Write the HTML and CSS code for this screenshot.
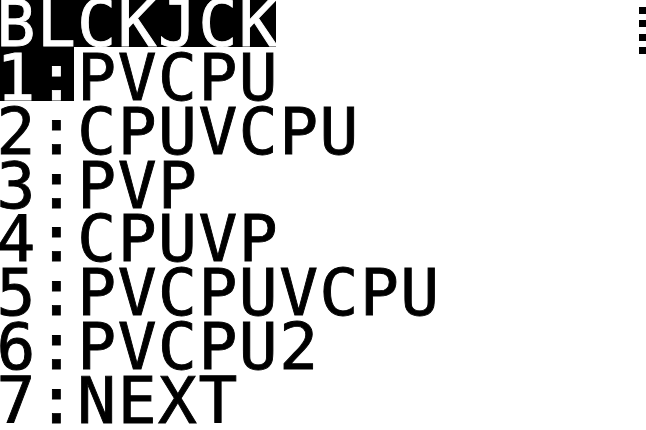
FILE: index.html
```html
<!DOCTYPE html>
<html lang="en">
<head>
    <meta charset="UTF-8">
    <title>BLCKJCK</title>
    <link rel="stylesheet" href="styles.css">
</head>
<body>
    <div class="screen">
        <div class="run"></div>
        <div class="lines">
            <div class="row"><span class="inv w7">BLCKJCK</span></div>
            <div class="row"><span class="inv w2">1:</span><span>PVCPU</span></div>
            <div class="row"><span>2:CPUVCPU</span></div>
            <div class="row"><span>3:PVP</span></div>
            <div class="row"><span>4:CPUVP</span></div>
            <div class="row"><span>5:PVCPUVCPU</span></div>
            <div class="row"><span>6:PVCPU2</span></div>
            <div class="row"><span>7:NEXT</span></div>
        </div>
    </div>
</body>
</html>
```

FILE: styles.css
```css
* {margin:0;padding:0;box-sizing: border-box;}
html, body {background: #fff;color: #000;}
.screen {position: relative;width: 646px;height: 430px;overflow: hidden;background: #fff;}
/* one calc pixel = 6.73 x 6.72, first row/col cropped off */
.lines {display: flex;flex-direction: column;margin: -6.72px 0 0 -6.73px;}
.row {display: flex;height: 53.75px;font-family: 'DejaVu Sans Mono', monospace;font-size: 64.5px;letter-spacing: 1.545px;line-height: 44.6px;white-space: pre;-webkit-text-stroke: 0.9px currentColor;}
.row span {display: block;height: 53.75px;padding: 9.15px 0 0 3.3px;}
.inv {background: #000;color: #fff;}
.w7 {width: 282.6px;}
.w2 {width: 80.75px;}
.run {position: absolute;right: 0;top: 6.72px;width: 6.73px;height: 47px;background: repeating-linear-gradient(to bottom, #000 0 6.72px, transparent 6.72px 13.44px);}
```
